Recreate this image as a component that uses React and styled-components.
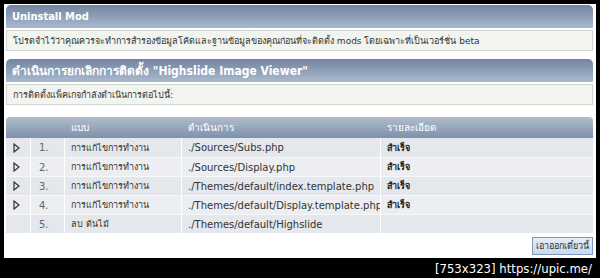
import React from 'react';
import styled, { createGlobalStyle } from 'styled-components';

const Global = createGlobalStyle`
  html, body {
    margin: 0;
    padding: 0;
    background: #000;
  }
  body {
    font-family: "DejaVu Sans", Tahoma, sans-serif;
  }
`;

const Frame = styled.div`
  width: 600px;
  height: 278px;
  background: #000;
  padding: 4px 4px 0 4px;
  box-sizing: border-box;
  display: flex;
  flex-direction: column;
`;

const Page = styled.div`
  background: #fff;
  height: 254px;
  padding: 1px 3px 0 2px;
  box-sizing: border-box;
  display: flex;
  flex-direction: column;
`;

const CatBar = styled.div`
  height: 23px;
  border-radius: 5px 5px 0 0;
  background: linear-gradient(#72849f, #a9bad0);
  color: #fff;
  font-family: "DejaVu Sans Condensed", "DejaVu Sans", sans-serif;
  font-weight: bold;
  font-size: ${p => (p.big ? '12px' : '11px')};
  display: flex;
  align-items: center;
  padding-left: 6px;
  margin-top: ${p => p.top || 0}px;
`;

const Note = styled.div`
  margin-top: 2px;
  height: 21px;
  box-sizing: border-box;
  background: #f1f4ef;
  border: 1px solid #d2d4d0;
  color: #333;
  font-size: 9px;
  display: flex;
  align-items: center;
  padding-left: 6px;
`;

const COLS = '24px 33px 116px 198px 1fr';

const Table = styled.div`
  margin-top: 12px;
  display: flex;
  flex-direction: column;
`;

const HeadRow = styled.div`
  display: grid;
  grid-template-columns: ${COLS};
  column-gap: 1px;
  height: 21px;
  border-radius: 4px 4px 0 0;
  background: linear-gradient(#b0bdcc, #7e91ab);
  color: #fff;
  font-size: 10px;
  align-items: center;
  span { padding-left: 6px; }
`;

const Row = styled.div`
  display: grid;
  grid-template-columns: ${COLS};
  column-gap: 1px;
  height: 19px;
  background: #fff;
  border-top: ${p => (p.first ? 0 : 1)}px solid #f7f8fa;
  box-sizing: border-box;
`;

const Cell = styled.div`
  background: ${p => (p.alt ? '#eceef1' : '#e4e8ec')};
  color: ${p => p.color || '#333'};
  font-size: ${p => p.size || 10}px;
  font-weight: ${p => (p.bold ? 'bold' : 'normal')};
  display: flex;
  align-items: center;
  padding-left: ${p => p.pad ?? 6}px;
  white-space: nowrap;
  overflow: hidden;
`;

const Actions = styled.div`
  display: flex;
  justify-content: flex-end;
  margin-top: 4px;
`;

const Button = styled.button`
  height: 18px;
  padding: 0 3px;
  border: 1px solid #7f97b8;
  background: linear-gradient(#e6eef8, #c8d8ee);
  color: #333;
  font-family: "DejaVu Sans", Tahoma, sans-serif;
  font-size: 9px;
`;

const Footer = styled.div`
  flex: 1;
  display: flex;
  justify-content: flex-end;
  align-items: center;
  color: #fff;
  font-family: "DejaVu Sans Condensed", "DejaVu Sans", sans-serif;
  font-size: 13px;
  padding-right: 4px;
  padding-top: 1px;
`;

const Arrow = () => (
  <svg width="7" height="10" viewBox="0 0 7 10">
    <path d="M1 1 L6 5 L1 9 Z" fill="none" stroke="#333" strokeWidth="1.2" />
  </svg>
);

const rows = [
  { n: '1.', t: 'การแก้ไขการทำงาน', a: './Sources/Subs.php', d: 'สำเร็จ', arrow: true },
  { n: '2.', t: 'การแก้ไขการทำงาน', a: './Sources/Display.php', d: 'สำเร็จ', arrow: true },
  { n: '3.', t: 'การแก้ไขการทำงาน', a: './Themes/default/index.template.php', d: 'สำเร็จ', arrow: true },
  { n: '4.', t: 'การแก้ไขการทำงาน', a: './Themes/default/Display.template.php', d: 'สำเร็จ', arrow: true },
  { n: '5.', t: 'ลบ ต้นไม้', a: './Themes/default/Highslide', d: '', arrow: false },
];

export default function App() {
  return (
    <>
      <Global />
      <Frame>
        <Page>
          <CatBar>Uninstall Mod</CatBar>
          <Note>โปรดจำไว้ว่าคุณควรจะทำการสำรองข้อมูลโค้ดและฐานข้อมูลของคุณก่อนที่จะติดตั้ง mods โดยเฉพาะที่เป็นเวอร์ชั่น beta</Note>
          <CatBar big top={8}>ดำเนินการยกเลิกการติดตั้ง "Highslide Image Viewer"</CatBar>
          <Note>การติดตั้งแพ็คเกจกำลังดำเนินการต่อไปนี้:</Note>
          <Table>
            <HeadRow>
              <span />
              <span />
              <span>แบบ</span>
              <span>ดำเนินการ</span>
              <span>รายละเอียด</span>
            </HeadRow>
            {rows.map((r, i) => (
              <Row key={r.n} first={i === 0}>
                <Cell alt={i % 2} pad={7}>{r.arrow && <Arrow />}</Cell>
                <Cell alt={i % 2} color="#666" pad={8}>{r.n}</Cell>
                <Cell alt={i % 2} size={9}>{r.t}</Cell>
                <Cell alt={i % 2}>{r.a}</Cell>
                <Cell alt={i % 2} bold size={9} color="#222">{r.d}</Cell>
              </Row>
            ))}
          </Table>
          <Actions>
            <Button>เอาออกเดี๋ยวนี้</Button>
          </Actions>
        </Page>
        <Footer>[753x323] https://upic.me/</Footer>
      </Frame>
    </>
  );
}
